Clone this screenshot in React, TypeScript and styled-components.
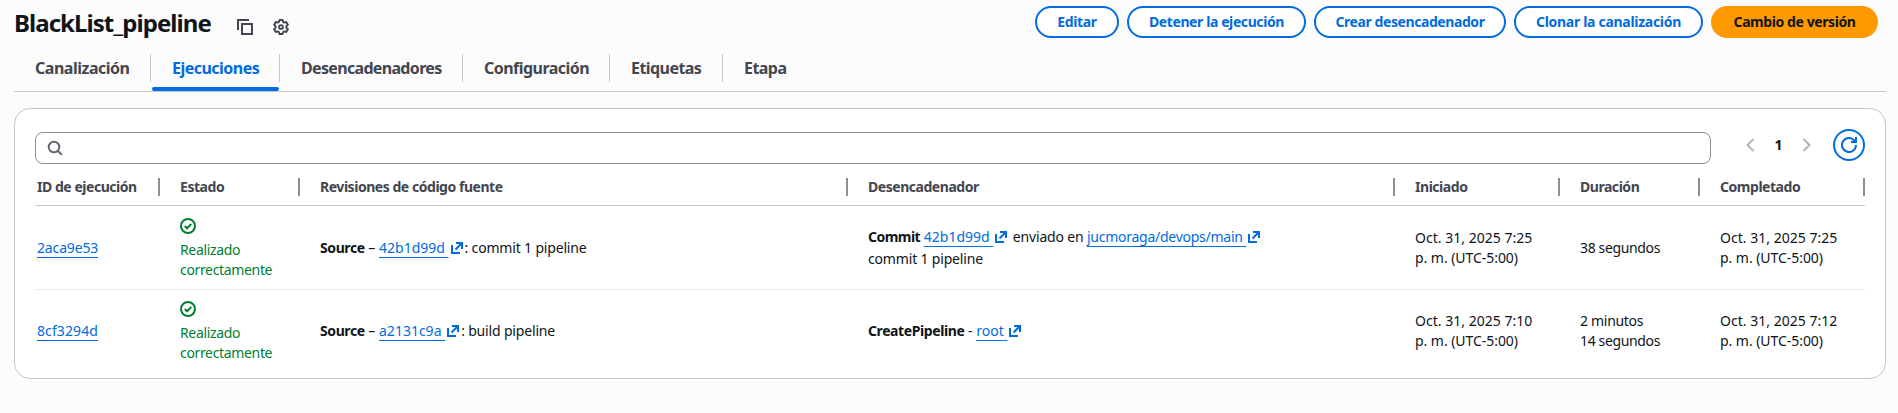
import React from 'react';
import styled, { createGlobalStyle, css } from 'styled-components';

const GlobalStyle = createGlobalStyle`
  *, *::before, *::after { box-sizing: border-box; }
  body {
    margin: 0;
    background: #fcfcfd;
    color: #0f141a;
    font: 400 14px/20px 'Noto Sans', 'Open Sans', sans-serif;
  }
`;

const Page = styled.main`
  padding: 6px 12px 0 14px;
  height: 413px;
  overflow: hidden;
`;

const Header = styled.header`
  display: flex;
  justify-content: space-between;
  align-items: flex-start;
  height: 48px;
  padding-right: 8px;
`;

const TitleGroup = styled.div`
  display: flex;
  align-items: flex-start;
`;

const Title = styled.h1`
  margin: 0;
  width: 223px;
  font-size: 24px;
  line-height: 34px;
  font-weight: 700;
  letter-spacing: -0.94px;
  white-space: nowrap;
`;

const IconButton = styled.button`
  display: flex;
  margin: 13px 20px 0 0;
  padding: 0;
  border: 0;
  background: none;
  color: #424650;
`;

const Actions = styled.div`
  display: flex;
  gap: 8px;
`;

const ActionButton = styled.button<{ $width: number; $track: number; $primary?: boolean }>`
  width: ${p => p.$width}px;
  height: 32px;
  padding: 0;
  border: 2px solid ${p => (p.$primary ? '#ff9900' : '#006ce0')};
  border-radius: 20px;
  background: ${p => (p.$primary ? '#ff9900' : '#fff')};
  color: ${p => (p.$primary ? '#0f141a' : '#006ce0')};
  font: inherit;
  font-weight: 700;
  letter-spacing: ${p => p.$track}px;
  white-space: nowrap;
`;

const Tabs = styled.nav`
  display: flex;
  height: 38px;
  width: 1872px;
  border-bottom: 1px solid #c6c6cd;
`;

const Tab = styled.a<{ $width: number; $track: number; $active?: boolean; $last?: boolean }>`
  position: relative;
  width: ${p => p.$width}px;
  height: 28px;
  padding-left: 21px;
  border-right: ${p => (p.$last ? '0' : '1px solid #c6c6cd')};
  color: ${p => (p.$active ? '#006ce0' : '#424650')};
  font-size: 16px;
  line-height: 29px;
  font-weight: 700;
  letter-spacing: ${p => p.$track}px;
  white-space: nowrap;
  ${p => p.$active && css`
    &::after {
      content: '';
      position: absolute;
      left: 1px;
      right: 0;
      bottom: -9px;
      height: 4px;
      border-radius: 2px;
      background: #006ce0;
    }
  `}
`;

const Card = styled.section`
  width: 1872px;
  height: 271px;
  margin-top: 16px;
  padding: 20px 20px 0;
  border: 1px solid #c6c6cd;
  border-radius: 16px;
  background: #fff;
`;

const Toolbar = styled.div`
  display: flex;
  align-items: flex-start;
  height: 43px;
`;

const SearchBox = styled.label`
  display: flex;
  align-items: center;
  width: 1676px;
  height: 32px;
  margin-top: 3px;
  padding-left: 11px;
  border: 1px solid #8c8c94;
  border-radius: 8px;
  color: #656871;
`;

const Pagination = styled.div`
  display: flex;
  align-items: center;
  justify-content: space-between;
  width: 65px;
  height: 32px;
  margin: 0 22px 0 35px;
  color: #b4b4bb;
`;

const PageNumber = styled.span`
  color: #0f141a;
  font-weight: 700;
`;

const Refresh = styled.button`
  display: flex;
  align-items: center;
  justify-content: center;
  width: 32px;
  height: 32px;
  padding: 0;
  border: 2px solid #006ce0;
  border-radius: 50%;
  background: #fff;
  color: #006ce0;
`;

const row = css`
  display: grid;
  grid-template-columns: 125px 140px 548px 547px 165px 140px 165px;
  width: 1830px;
`;

const HeadRow = styled.div`
  ${row}
  height: 34px;
  border-bottom: 1px solid #c6c6cd;
`;

const HeadCell = styled.div<{ $first?: boolean }>`
  height: 18px;
  margin-top: 6px;
  padding-left: ${p => (p.$first ? 2 : 20)}px;
  border-right: 2px solid #8c8c94;
  color: #424650;
  font-weight: 700;
  line-height: 18px;
  letter-spacing: -0.46px;
  white-space: nowrap;
`;

const Row = styled.div<{ $last?: boolean }>`
  ${row}
  height: ${p => (p.$last ? 82 : 84)}px;
  border-bottom: ${p => (p.$last ? '0' : '1px solid #ebebf0')};
`;

const Cell = styled.div<{ $first?: boolean; $line?: number }>`
  align-self: center;
  padding-left: ${p => (p.$first ? 2 : 20)}px;
  line-height: ${p => p.$line ?? 20}px;
  white-space: nowrap;
`;

const Text = styled.span<{ $track?: number; $bold?: boolean }>`
  font-weight: ${p => (p.$bold ? 700 : 400)};
  letter-spacing: ${p => p.$track ?? 0}px;
`;

const Link = styled.a<{ $track?: number }>`
  color: #006ce0;
  letter-spacing: ${p => p.$track ?? -0.15}px;
  text-decoration: underline 1px;
  text-underline-offset: 4px;
  text-decoration-skip-ink: none;
`;

const ExternalSvg = styled.svg`
  margin: 0 2px;
  vertical-align: -1px;
  color: #006ce0;
`;

const Status = styled.div`
  display: flex;
  flex-direction: column;
  color: #00802f;
  letter-spacing: -0.34px;

  svg { margin: 2px 0 6px; }
`;

const CopyIcon = () => (
  <svg width="16" height="16" viewBox="0 0 16 16" fill="none" stroke="currentColor" strokeWidth="2">
    <path d="M5 5h10v10H5z" />
    <path d="M1 11V1h11" />
  </svg>
);

const GearIcon = () => (
  <svg width="16" height="16" viewBox="0 0 16 16" fill="none" stroke="currentColor" strokeWidth="1.9" strokeLinejoin="round">
    <path d="M6.4 1h3.2l.5 1.9 1.2.7 1.9-.6 1.7 2.8L13.4 7.2v1.6l1.5 1.4-1.7 2.8-1.9-.6-1.2.7-.5 1.9H6.4l-.5-1.9-1.2-.7-1.9.6-1.7-2.8 1.5-1.4V7.2L1.1 5.8 2.8 3l1.9.6 1.2-.7z" />
    <circle cx="8" cy="8" r="1.9" />
  </svg>
);

const SearchIcon = () => (
  <svg width="16" height="16" viewBox="0 0 16 16" fill="none" stroke="currentColor" strokeWidth="2">
    <circle cx="7" cy="7" r="5.3" />
    <path d="m10.8 10.8 4 4" />
  </svg>
);

const Chevron = ({ right }: { right?: boolean }) => (
  <svg width="9" height="14" viewBox="0 0 9 14" fill="none" stroke="currentColor" strokeWidth="2">
    <path d={right ? 'm1.5 1 6 6-6 6' : 'm7.5 1-6 6 6 6'} />
  </svg>
);

const RefreshIcon = () => (
  <svg width="16" height="16" viewBox="0 0 16 16" fill="none" stroke="currentColor" strokeWidth="2">
    <path d="M15 8a7 7 0 1 1-2.1-5L15 5" />
    <path d="M15 0v5h-5" />
  </svg>
);

const CheckIcon = () => (
  <svg width="16" height="16" viewBox="0 0 16 16" fill="none" stroke="currentColor" strokeWidth="2">
    <circle cx="8" cy="8" r="7" />
    <path d="m4.8 8 2.3 2.3 4.2-4.4" />
  </svg>
);

const ExternalIcon = () => (
  <ExternalSvg width="12" height="12" viewBox="0 0 12 12" fill="none" stroke="currentColor" strokeWidth="2">
    <path d="M1 3v8h8" />
    <path d="M5 1h6v6" />
    <path d="M4.5 7.5l6.5-6.5" />
  </ExternalSvg>
);

const ExternalLink = ({ children, track = 0 }: { children: string; track?: number }) => (
  <>
    <Link $track={track}>{children}&nbsp;</Link>
    <ExternalIcon />
  </>
);

const StatusCell = () => (
  <Cell>
    <Status>
      <CheckIcon />
      <span>Realizado</span>
      <span>correctamente</span>
    </Status>
  </Cell>
);

const DateCell = ({ time }: { time: string }) => (
  <Cell>
    <Text $track={0.02}>Oct. 31, 2025 {time}</Text>
    <br />
    <Text $track={-0.05}>p. m. (UTC-5:00)</Text>
  </Cell>
);

export default function App() {
  return (
    <>
      <GlobalStyle />
      <Page>
        <Header>
          <TitleGroup>
            <Title>BlackList_pipeline</Title>
            <IconButton aria-label="Copiar"><CopyIcon /></IconButton>
            <IconButton aria-label="Ajustes"><GearIcon /></IconButton>
          </TitleGroup>
          <Actions>
            <ActionButton $width={84} $track={-0.35}>Editar</ActionButton>
            <ActionButton $width={179} $track={-0.4}>Detener la ejecución</ActionButton>
            <ActionButton $width={192} $track={-0.42}>Crear desencadenador</ActionButton>
            <ActionButton $width={189} $track={-0.3}>Clonar la canalización</ActionButton>
            <ActionButton $width={167} $track={-0.42} $primary>Cambio de versión</ActionButton>
          </Actions>
        </Header>
        <Tabs>
          <Tab $width={137} $track={-0.48}>Canalización</Tab>
          <Tab $width={129} $track={-0.52} $active>Ejecuciones</Tab>
          <Tab $width={183} $track={-0.67}>Desencadenadores</Tab>
          <Tab $width={147} $track={-0.54}>Configuración</Tab>
          <Tab $width={113} $track={-0.56}>Etiquetas</Tab>
          <Tab $width={90} $track={-0.54} $last>Etapa</Tab>
        </Tabs>
        <Card>
          <Toolbar>
            <SearchBox><SearchIcon /></SearchBox>
            <Pagination>
              <Chevron />
              <PageNumber>1</PageNumber>
              <Chevron right />
            </Pagination>
            <Refresh aria-label="Actualizar"><RefreshIcon /></Refresh>
          </Toolbar>
          <HeadRow>
            <HeadCell $first>ID de ejecución</HeadCell>
            <HeadCell>Estado</HeadCell>
            <HeadCell>Revisiones de código fuente</HeadCell>
            <HeadCell>Desencadenador</HeadCell>
            <HeadCell>Iniciado</HeadCell>
            <HeadCell>Duración</HeadCell>
            <HeadCell>Completado</HeadCell>
          </HeadRow>
          <Row>
            <Cell $first><Link>2aca9e53</Link></Cell>
            <StatusCell />
            <Cell>
              <Text $bold $track={-0.4}>Source</Text> – <ExternalLink>42b1d99d</ExternalLink>
              <Text $track={-0.17}>: commit 1 pipeline</Text>
            </Cell>
            <Cell $line={22}>
              <Text $bold $track={-0.52}>Commit</Text> <ExternalLink>42b1d99d</ExternalLink>
              <Text $track={-0.17}> enviado en </Text>
              <ExternalLink track={-0.26}>jucmoraga/devops/main</ExternalLink>
              <br />
              <Text $track={-0.17}>commit 1 pipeline</Text>
            </Cell>
            <DateCell time="7:25" />
            <Cell><Text $track={-0.36}>38 segundos</Text></Cell>
            <DateCell time="7:25" />
          </Row>
          <Row $last>
            <Cell $first><Link $track={0.1}>8cf3294d</Link></Cell>
            <StatusCell />
            <Cell>
              <Text $bold $track={-0.4}>Source</Text> – <ExternalLink>a2131c9a</ExternalLink>
              <Text $track={-0.17}>: build pipeline</Text>
            </Cell>
            <Cell>
              <Text $bold $track={-0.4}>CreatePipeline</Text> - <ExternalLink>root</ExternalLink>
            </Cell>
            <DateCell time="7:10" />
            <Cell>
              <Text $track={-0.3}>2 minutos</Text>
              <br />
              <Text $track={-0.36}>14 segundos</Text>
            </Cell>
            <DateCell time="7:12" />
          </Row>
        </Card>
      </Page>
    </>
  );
}
